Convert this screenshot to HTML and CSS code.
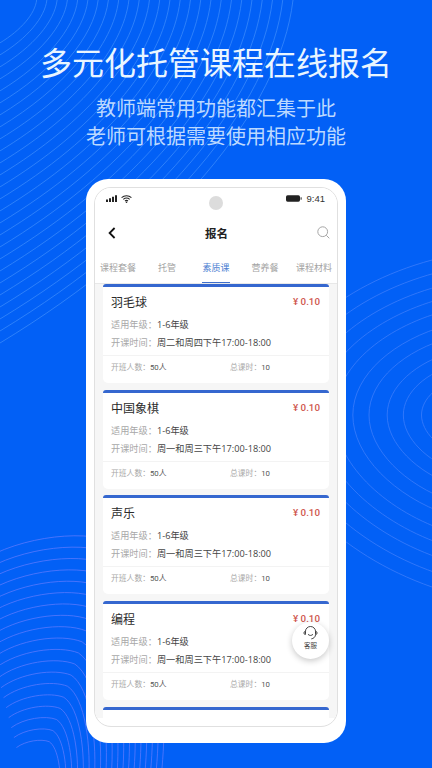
FILE: index.html
```html
<!DOCTYPE html>
<html lang="zh-CN">
<head>
<meta charset="utf-8">
<title>多元化托管课程在线报名</title>
<link rel="stylesheet" href="styles.css">
</head>
<body>
<main class="page">
  <svg class="bg-lines" width="432" height="768" viewBox="0 0 432 768" aria-hidden="true">
    <defs>
      <path id="tl" class="ln" d="M293 0C280 110 170 240 0 343"/>
      <path id="rt" class="ln" d="M-202 0C-202 -70 -130 -130 -38 -155C30 -172 160 -170 250 -120V120C160 180 30 190 -38 172C-130 140 -202 70 -202 0Z"/>
      <path id="bl" class="ln" d="M-60 -232C-20 -262 50 -272 85 -258C125 -232 140 -120 132 -32"/>
    </defs>
    <g class="lines-tl">
      <use href="#tl"/><use href="#tl" transform="scale(.965)"/><use href="#tl" transform="scale(.93)"/><use href="#tl" transform="scale(.895)"/><use href="#tl" transform="scale(.86)"/><use href="#tl" transform="scale(.825)"/><use href="#tl" transform="scale(.79)"/><use href="#tl" transform="scale(.755)"/><use href="#tl" transform="scale(.72)"/><use href="#tl" transform="scale(.685)"/><use href="#tl" transform="scale(.65)"/><use href="#tl" transform="scale(.615)"/><use href="#tl" transform="scale(.58)"/><use href="#tl" transform="scale(.545)"/><use href="#tl" transform="scale(.51)"/><use href="#tl" transform="scale(.475)"/><use href="#tl" transform="scale(.44)"/><use href="#tl" transform="scale(.405)"/><use href="#tl" transform="scale(.37)"/><use href="#tl" transform="scale(.335)"/><use href="#tl" transform="scale(.3)"/><use href="#tl" transform="scale(.265)"/><use href="#tl" transform="scale(.23)"/><use href="#tl" transform="scale(.195)"/><use href="#tl" transform="scale(.16)"/><use href="#tl" transform="scale(.125)"/>
    </g>
    <g class="lines-rt" transform="translate(470 415)">
      <use href="#rt"/><use href="#rt" transform="scale(.916)"/><use href="#rt" transform="scale(.83)"/><use href="#rt" transform="scale(.75)"/><use href="#rt" transform="scale(.67)"/><use href="#rt" transform="scale(.58)"/><use href="#rt" transform="scale(.5)"/><use href="#rt" transform="scale(.41)"/><use href="#rt" transform="scale(.33)"/><use href="#rt" transform="scale(.24)"/>
    </g>
    <g class="lines-bl" transform="translate(30 800)">
      <use href="#bl"/><use href="#bl" transform="scale(.957)"/><use href="#bl" transform="scale(.914)"/><use href="#bl" transform="scale(.871)"/><use href="#bl" transform="scale(.828)"/><use href="#bl" transform="scale(.785)"/><use href="#bl" transform="scale(.742)"/><use href="#bl" transform="scale(.699)"/><use href="#bl" transform="scale(.656)"/><use href="#bl" transform="scale(.613)"/><use href="#bl" transform="scale(.57)"/><use href="#bl" transform="scale(.527)"/><use href="#bl" transform="scale(.484)"/><use href="#bl" transform="scale(.441)"/><use href="#bl" transform="scale(.398)"/><use href="#bl" transform="scale(.355)"/><use href="#bl" transform="scale(.312)"/><use href="#bl" transform="scale(.269)"/><use href="#bl" transform="scale(.226)"/>
    </g>
  </svg>

  <header class="hero">
    <h1 class="hero-title">多元化托管课程在线报名</h1>
    <p class="hero-sub">教师端常用功能都汇集于此<br>老师可根据需要使用相应功能</p>
  </header>

  <section class="phone">
    <div class="screen">
      <div class="app-head">
        <div class="status">
          <div class="status-left">
            <svg width="12" height="7" viewBox="0 0 12 7"><path class="fill-dark" d="M0 4.5h2V7H0zM3 3.3h2V7H3zM6 1.8h2V7H6zM9 .3h2V7H9z"/></svg>
            <svg width="11" height="8" viewBox="0 0 11 8"><path class="wifi" d="M.6 2.6C3.3.2 7.7.2 10.4 2.6M2.3 4.3c1.8-1.500 4.600-1.500 6.400 0M4 6c.9-.7 2.100-.7 3 0"/><circle class="fill-dark" cx="5.5" cy="7.2" r=".8"/></svg>
          </div>
          <span class="notch"></span>
          <div class="status-right">
            <svg width="16" height="7" viewBox="0 0 16 7"><rect class="fill-dark" x="0" y=".3" width="14" height="6.4" rx="1.6"/><rect class="fill-dark" x="14.6" y="2.3" width="1" height="2.4"/></svg>
            <span class="clock">9:41</span>
          </div>
        </div>
        <div class="nav">
          <svg class="back" width="8" height="12" viewBox="0 0 8 12"><path d="M6.6 1 1.6 6l5 5"/></svg>
          <span class="nav-title">报名</span>
          <svg class="search" width="13" height="13" viewBox="0 0 13 13"><circle cx="5.7" cy="5.7" r="4.900"/><path d="m9.300 9.300 3 3"/></svg>
        </div>
        <nav class="tabs">
          <span class="tab">课程套餐</span>
          <span class="tab">托管</span>
          <span class="tab tab-on">素质课</span>
          <span class="tab">营养餐</span>
          <span class="tab">课程材料</span>
        </nav>
      </div>

      <div class="list">
        <article class="card">
          <div class="card-main">
            <div class="card-top"><h2 class="card-name">羽毛球</h2><span class="price">¥ 0.10</span></div>
            <p class="row"><span class="key">适用年级：</span>1-6年级</p>
            <p class="row"><span class="key">开课时间：</span>周二和周四下午17:00-18:00</p>
          </div>
          <div class="card-foot"><span class="foot-a"><span class="key">开班人数：</span>50人</span><span><span class="key">总课时：</span>10</span></div>
        </article>
        <article class="card">
          <div class="card-main">
            <div class="card-top"><h2 class="card-name">中国象棋</h2><span class="price">¥ 0.10</span></div>
            <p class="row"><span class="key">适用年级：</span>1-6年级</p>
            <p class="row"><span class="key">开课时间：</span>周一和周三下午17:00-18:00</p>
          </div>
          <div class="card-foot"><span class="foot-a"><span class="key">开班人数：</span>50人</span><span><span class="key">总课时：</span>10</span></div>
        </article>
        <article class="card">
          <div class="card-main">
            <div class="card-top"><h2 class="card-name">声乐</h2><span class="price">¥ 0.10</span></div>
            <p class="row"><span class="key">适用年级：</span>1-6年级</p>
            <p class="row"><span class="key">开课时间：</span>周一和周三下午17:00-18:00</p>
          </div>
          <div class="card-foot"><span class="foot-a"><span class="key">开班人数：</span>50人</span><span><span class="key">总课时：</span>10</span></div>
        </article>
        <article class="card">
          <div class="card-main">
            <div class="card-top"><h2 class="card-name">编程</h2><span class="price">¥ 0.10</span></div>
            <p class="row"><span class="key">适用年级：</span>1-6年级</p>
            <p class="row"><span class="key">开课时间：</span>周一和周三下午17:00-18:00</p>
          </div>
          <div class="card-foot"><span class="foot-a"><span class="key">开班人数：</span>50人</span><span><span class="key">总课时：</span>10</span></div>
        </article>
        <article class="card card-last"></article>
      </div>

      <div class="service">
        <svg width="15" height="14" viewBox="0 0 15 14"><path d="M2.400 7.500V5.600a5.100 5.100 0 0 1 10.200 0v1.900M1 6.600c0-.7.500-1.100 1.400-1.100v3C1.500 8.500 1 8 1 7.300zM14 6.600c0-.7-.5-1.100-1.400-1.100v3c.9 0 1.400-.5 1.400-1.200zM5 8.300c1.300 1.500 3.700 1.500 5 0M12.600 8.500c-.2 2.600-2 4-4.300 4.400"/></svg>
        <span class="service-label">客服</span>
      </div>
    </div>
  </section>
</main>
</body>
</html>
```

FILE: styles.css
```css
* { box-sizing: border-box; }
html, body { margin: 0; padding: 0; }
body { font-family: "Open Sans", "Noto Sans CJK SC", sans-serif; }
h1, h2, p { margin: 0; font-weight: 400; }

.page {
  position: relative;
  width: 432px;
  height: 768px;
  overflow: hidden;
  background: #0260f6;
  display: flex;
  flex-direction: column;
  align-items: center;
}
.bg-lines { position: absolute; left: 0; top: 0; }
.ln { fill: none; stroke-width: .8; vector-effect: non-scaling-stroke; }
.lines-tl { stroke: #4f9bff; opacity: .7; }
.lines-rt { stroke: #5a8dff; opacity: .65; }
.lines-bl { stroke: #6a7dff; opacity: .85; }

.hero { position: relative; text-align: center; height: 179px; padding-top: 39px; font-family: "Noto Sans CJK SC", sans-serif; }
.hero-title { font-size: 32px; line-height: 44px; color: #e9f5ff; }
.hero-sub { margin-top: 11px; font-size: 20px; line-height: 28px; color: #bcd9ff; }

.phone {
  position: relative;
  width: 260px;
  height: 564px;
  padding: 8px;
  background: #fff;
  border-radius: 22px;
}
.screen {
  position: relative;
  height: 540px;
  overflow: hidden;
  border: 1px solid #e0e0e0;
  border-radius: 17px;
  background: #fff;
  display: flex;
  flex-direction: column;
}
.app-head { background: #fff; border-bottom: 1px solid #e8e8e8; height: 96px; flex: none; }
.status {
  position: relative;
  height: 20px;
  padding: 6px 12px 0 11px;
  display: flex;
  justify-content: space-between;
  align-items: flex-start;
}
.status-left, .status-right { display: flex; align-items: center; gap: 3px; height: 9px; }
.status-right { gap: 5px; }
.fill-dark { fill: #222; }
.wifi { fill: none; stroke: #222; stroke-width: 1.100; }
.clock { font-family: "Liberation Sans", sans-serif; font-size: 9.500px; color: #333; }
.notch {
  position: absolute;
  left: 114px;
  top: 8px;
  width: 14px;
  height: 14px;
  border-radius: 50%;
  background: #dcdcdc;
}
.nav {
  height: 40px;
  padding: 9px 7px 0 13px;
  display: flex;
  align-items: center;
  justify-content: space-between;
}
.back { fill: none; stroke: #111; stroke-width: 1.800; }
.search { fill: none; stroke: #a5a5a5; stroke-width: 1; }
.nav-title { font-size: 11.500px; font-weight: 700; color: #222; font-family: "Noto Sans CJK SC", sans-serif; }
.tabs { display: grid; grid-template-columns: repeat(5, 49px); height: 34px; margin-left: -1.500px; }
.tab {
  justify-self: center;
  height: 35px;
  padding-top: 12px;
  font-size: 9px;
  line-height: 15px;
  color: #a3a3a3;
  white-space: nowrap;
  border-bottom: 1px solid transparent;
}
.tab-on { color: #4f7fd2; border-bottom: 1.200px solid #3f6fcc; }

.list {
  height: 434px;
  overflow: hidden;
  background: #f6f6f6;
  padding: 0 8px;
  display: flex;
  flex-direction: column;
  gap: 6.700px;
}
.card {
  flex: none;
  height: 99px;
  background: #fff;
  border-top: 3px solid #3567cf;
  border-radius: 3px 3px 5px 5px;
  overflow: hidden;
}
.card-main { height: 68px; padding: 6px 8px 0; }
.card-top { display: flex; justify-content: space-between; align-items: flex-start; height: 23px; }
.card-name { font-size: 12px; line-height: 20px; color: #2b2b2b; }
.price { font-family: Roboto, sans-serif; font-size: 9.800px; font-weight: 500; line-height: 18px; color: #d0574f; margin-right: 1px; }
.row { font-size: 9.200px; line-height: 18px; color: #444; white-space: nowrap; }
.key { color: #a8a8a8; }
.card-foot {
  height: 22px;
  padding: 0 8px;
  display: flex;
  align-items: center;
  font-family: Roboto, "Noto Sans CJK SC", sans-serif;
  font-size: 7.800px;
  color: #555;
  border-top: 1px solid #f3f3f3;
}
.foot-a { width: 119px; }
.card-last { height: 30px; }

.service {
  position: absolute;
  left: 197px;
  top: 434px;
  width: 37px;
  height: 37px;
  border-radius: 50%;
  background: #fff;
  box-shadow: 0 2px 6px rgba(0, 0, 0, .22);
  display: flex;
  flex-direction: column;
  align-items: center;
  padding-top: 4px;
}
.service svg { fill: none; stroke: #333; stroke-width: .9; flex: none; }
.service-label { font-size: 6.500px; line-height: 11px; color: #444; font-family: "Noto Sans CJK SC", sans-serif; }
```
